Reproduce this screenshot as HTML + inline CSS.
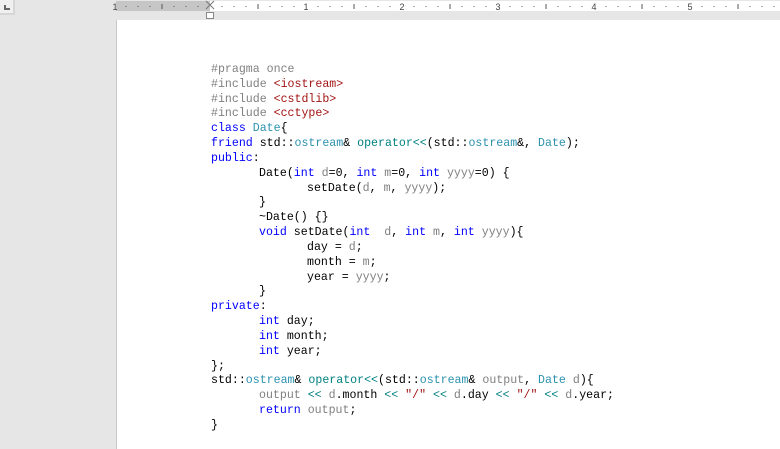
<!DOCTYPE html>
<html><head><meta charset="utf-8"><style>
html,body{margin:0;padding:0;width:780px;height:449px;overflow:hidden;background:#e6e6e6;font-family:"Liberation Sans",sans-serif}
#ruler{position:absolute;left:0;top:0;width:780px;height:20px;background:#e6e6e6}
#page{position:absolute;left:116px;top:20px;width:664px;height:429px;background:#fff;border-left:1px solid #c8c8c8;box-sizing:border-box}
#tabsel{position:absolute;left:0;top:0;width:13px;height:13px;background:#f0f0f0;border-right:2px solid #d6d6d6;border-bottom:2px solid #d6d6d6}
pre{position:absolute;left:211px;top:63px;margin:0;font-family:"Liberation Mono",monospace;font-size:11.6px;line-height:14.83px;color:#000;tab-size:7}
.k{color:#0000ff}.t{color:#2b91af}.s{color:#a31515}.p{color:#808080}.o{color:#008080}
</style></head><body>
<div id="ruler"><svg id="rs" width="780" height="20" style="position:absolute;left:0;top:0"></svg>
<div id="tabsel"><div style="position:absolute;left:4px;top:5px;width:2px;height:5px;background:#666"></div><div style="position:absolute;left:4px;top:8px;width:6px;height:2px;background:#666"></div></div>
</div>
<div id="page"></div>
<pre><span class="p">#pragma once</span>
<span class="p">#include </span><span class="s">&lt;iostream&gt;</span>
<span class="p">#include </span><span class="s">&lt;cstdlib&gt;</span>
<span class="p">#include </span><span class="s">&lt;cctype&gt;</span>
<span class="k">class</span> <span class="t">Date</span>{
<span class="k">friend</span> std::<span class="t">ostream</span>&amp; <span class="o">operator&lt;&lt;</span>(std::<span class="t">ostream</span>&amp;, <span class="t">Date</span>);
<span class="k">public</span>:
<span style="padding-left:48px">Date(<span class="k">int</span> <span class="p">d</span>=0, <span class="k">int</span> <span class="p">m</span>=0, <span class="k">int</span> <span class="p">yyyy</span>=0) {</span>
<span style="padding-left:96px">setDate(<span class="p">d</span>, <span class="p">m</span>, <span class="p">yyyy</span>);</span>
<span style="padding-left:48px">}</span>
<span style="padding-left:48px">~Date() {}</span>
<span style="padding-left:48px"><span class="k">void</span> setDate(<span class="k">int</span>  <span class="p">d</span>, <span class="k">int</span> <span class="p">m</span>, <span class="k">int</span> <span class="p">yyyy</span>){</span>
<span style="padding-left:96px">day = <span class="p">d</span>;</span>
<span style="padding-left:96px">month = <span class="p">m</span>;</span>
<span style="padding-left:96px">year = <span class="p">yyyy</span>;</span>
<span style="padding-left:48px">}</span>
<span class="k">private</span>:
<span style="padding-left:48px"><span class="k">int</span> day;</span>
<span style="padding-left:48px"><span class="k">int</span> month;</span>
<span style="padding-left:48px"><span class="k">int</span> year;</span>
};
std::<span class="t">ostream</span>&amp; <span class="o">operator&lt;&lt;</span>(std::<span class="t">ostream</span>&amp; <span class="p">output</span>, <span class="t">Date</span> <span class="p">d</span>){
<span style="padding-left:48px"><span class="p">output</span> <span class="o">&lt;&lt;</span> <span class="p">d</span>.month <span class="o">&lt;&lt;</span> <span class="s">"/"</span> <span class="o">&lt;&lt;</span> <span class="p">d</span>.day <span class="o">&lt;&lt;</span> <span class="s">"/"</span> <span class="o">&lt;&lt;</span> <span class="p">d</span>.year;</span>
<span style="padding-left:48px"><span class="k">return</span> <span class="p">output</span>;</span>
}</pre>
<script>
var s='<rect x="116" y="1" width="664" height="10" fill="#fff"/><rect x="116" y="1" width="94" height="10" fill="#c6c6c6"/>';
for(var x=126;x<780;x+=12){var r=x-210;var m=((r%96)+96)%96;
 if(Math.abs(m)<1) continue;
 if(m==48) s+='<rect x="'+(x-0.5)+'" y="4" width="1" height="5" fill="#555"/>';
 else s+='<rect x="'+(x-0.5)+'" y="6" width="1" height="1" fill="#555"/>';}
var nums=[[115,'1'],[306,'1'],[402,'2'],[498,'3'],[594,'4'],[690,'5']];
nums.forEach(function(n){s+='<text x="'+n[0]+'" y="10" font-family="Liberation Sans" font-size="9" fill="#444" text-anchor="middle">'+n[1]+'</text>';});
s+='<path d="M206 1 L214 9 M214 1 L206 9" stroke="#777" stroke-width="1" fill="none"/>';
s+='<rect x="206.5" y="12.5" width="7" height="6" fill="#fff" stroke="#888"/>';
document.getElementById('rs').innerHTML=s;
</script>
</body></html>
